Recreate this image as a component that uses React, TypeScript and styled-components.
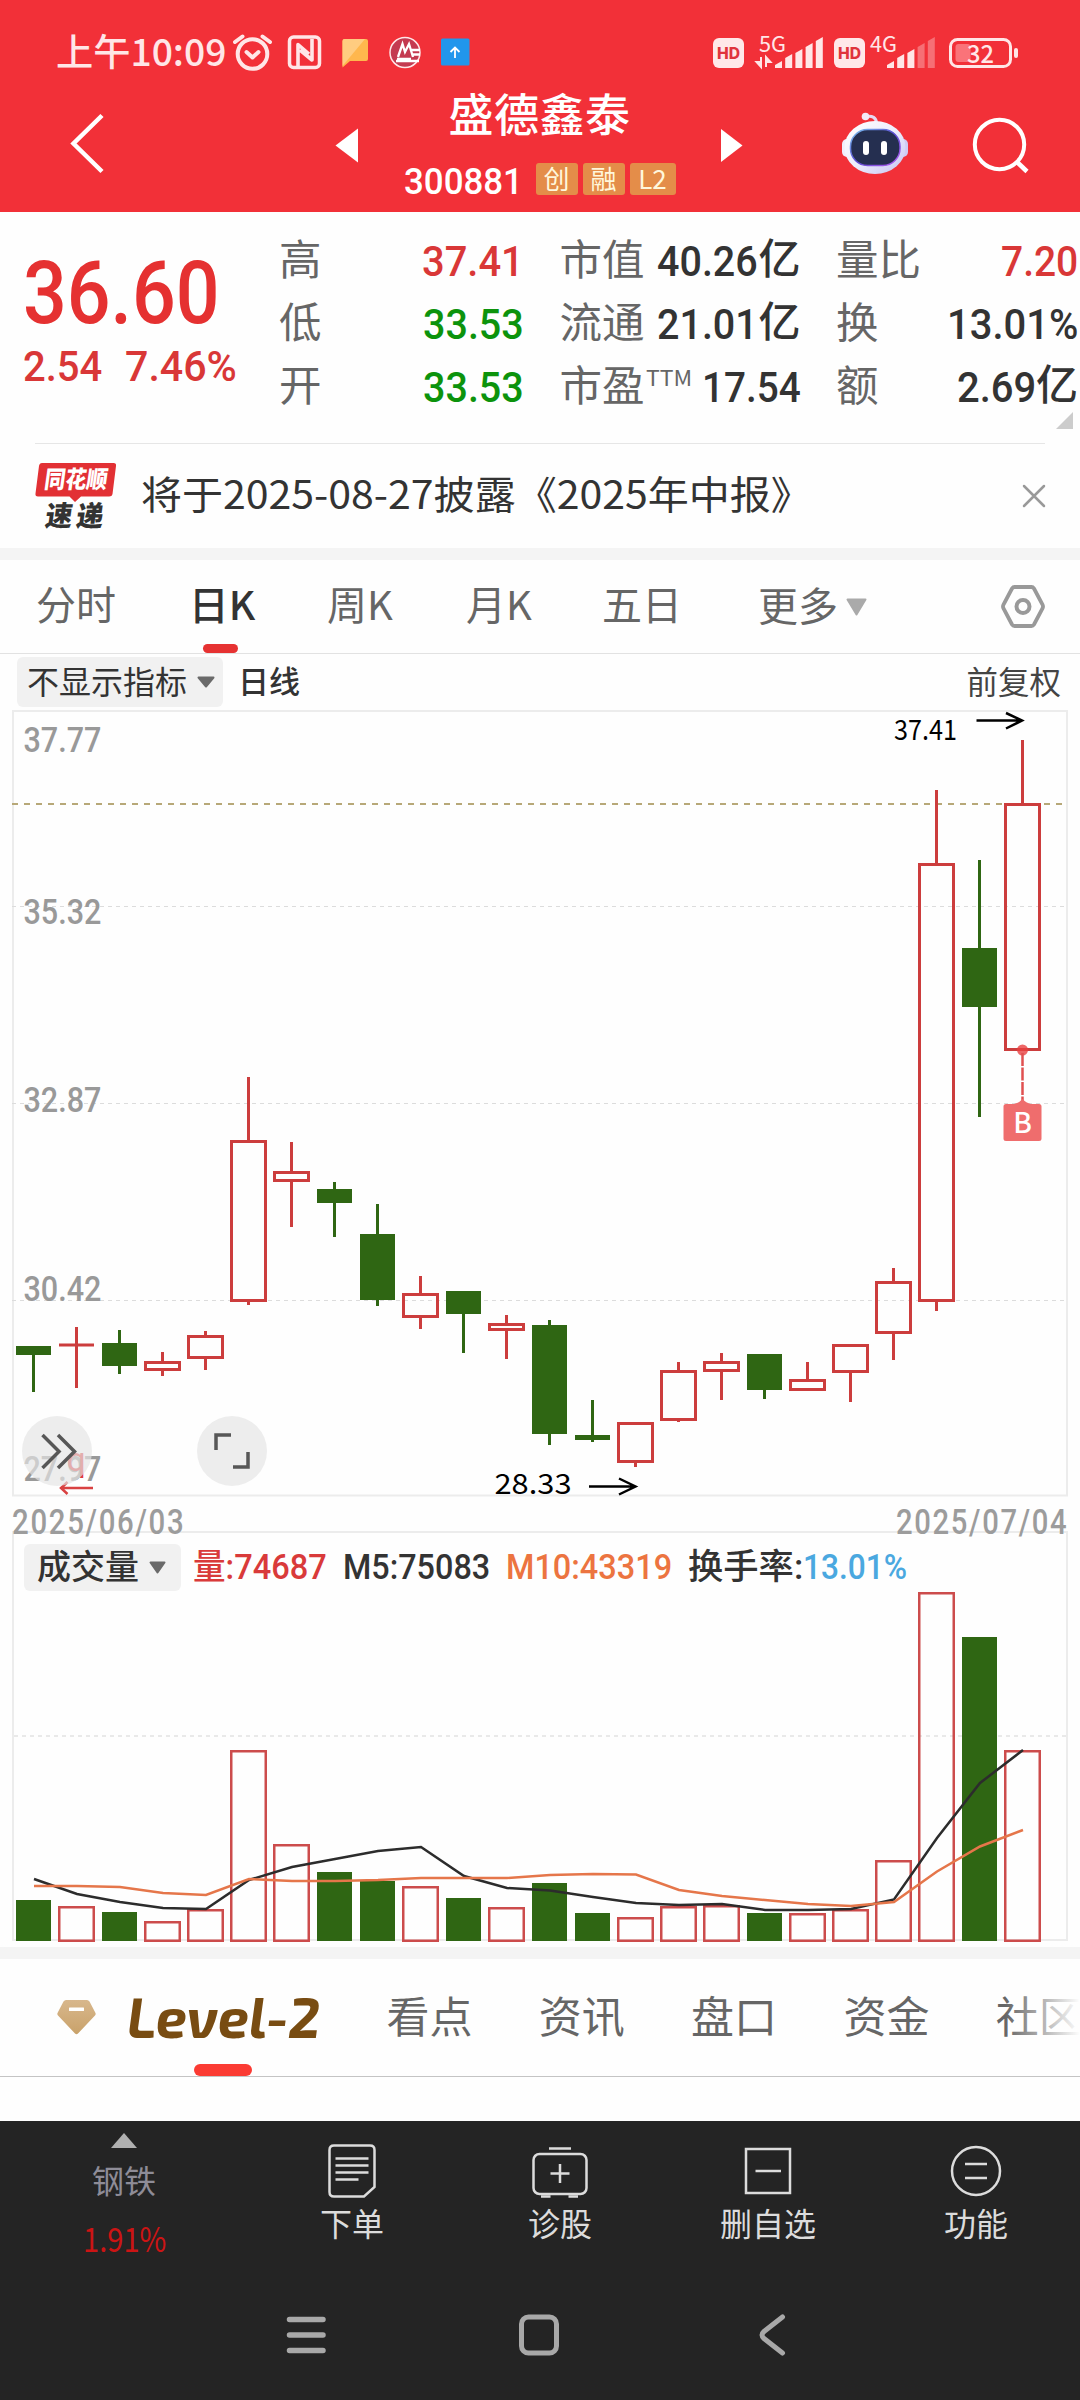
import React, { useLayoutEffect, useRef, useState } from 'react';
import styled, { createGlobalStyle } from 'styled-components';

const CJK = '"Noto Sans CJK SC", sans-serif';
const DIN = 'Roboto, "Noto Sans CJK SC", sans-serif';
const UP = '#cc3d3d';
const DOWN = '#2f6613';

const Global = createGlobalStyle`
  html, body { margin: 0; padding: 0; background: #fff; }
  * { box-sizing: border-box; }
  svg { display: block; flex: none; overflow: visible; }
`;

const Screen = styled.div`
  width: 1080px;
  height: 2400px;
  overflow: hidden;
  display: flex;
  flex-direction: column;
  background: #fefefe;
  font-family: ${CJK};
  color: #333;
`;

/* ---------- condensed text: squeezes a label to a given width ---------- */

const FitBox = styled.span<{ $w: number }>`
  display: inline-block;
  flex: none;
  width: ${(p) => p.$w}px;
  white-space: nowrap;
`;
const FitInner = styled.span`
  display: inline-block;
  transform-origin: 0 50%;
`;

function Fit({ w, children }: { w: number; children: React.ReactNode }) {
  const ref = useRef<HTMLSpanElement>(null);
  const [k, setK] = useState(1);
  useLayoutEffect(() => {
    if (ref.current && ref.current.offsetWidth) setK(w / ref.current.offsetWidth);
  }, [w]);
  return (
    <FitBox $w={w}>
      <FitInner ref={ref} style={{ transform: `scaleX(${k})` }}>{children}</FitInner>
    </FitBox>
  );
}

/* ---------- header ---------- */

const Header = styled.header`
  height: 212px;
  flex: none;
  background: #f23038;
  color: #fff;
`;
const StatusBar = styled.div`
  height: 82px;
  padding: 24px 61px 0 56px;
  display: flex;
  justify-content: space-between;
  align-items: center;
`;
const StatusGroup = styled.div<{ $gap?: number }>`
  display: flex;
  align-items: center;
  gap: ${(p) => p.$gap ?? 0}px;
`;
const Clock = styled.span`
  font: 500 37px/50px ${CJK};
  color: #ffe6e7;
  margin-top: -7px;
`;
const NavBar = styled.div`
  height: 130px;
  padding: 0 50px 0 70px;
  display: flex;
  align-items: flex-start;
`;
const IconSlot = styled.div<{ $ml?: number; $mt?: number }>`
  margin-left: ${(p) => p.$ml ?? 0}px;
  margin-top: ${(p) => p.$mt ?? 0}px;
`;
const TitleBlock = styled.div`
  width: 271px;
  margin-left: 46px;
  display: flex;
  flex-direction: column;
  align-items: center;
`;
const StockName = styled.h1`
  margin: 0;
  height: 81px;
  font: 500 45px/62px ${CJK};
  letter-spacing: 0.5px;
`;
const CodeRow = styled.div`
  display: flex;
  align-items: center;
  gap: 5px;
  height: 32px;
`;
const Code = styled.span`
  font: 500 37.5px/32px ${DIN};
  margin: 3px 8px 0 0;
`;
const Badge = styled.span<{ $w?: number }>`
  width: ${(p) => p.$w ?? 42}px;
  height: 32px;
  border-radius: 3px;
  background: #e48d49;
  color: #fff7dc;
  font: 400 26px/29px ${CJK};
  text-align: center;
`;

const HdIcon = () => (
  <svg width="31" height="30" viewBox="0 0 31 30">
    <rect width="31" height="30" rx="6" fill="#ffe8e9" />
    <text x="15.5" y="20.5" textAnchor="middle" fontFamily="Inter, sans-serif" fontWeight="800" fontSize="16" textLength="23" lengthAdjust="spacingAndGlyphs" fill="#e0343c">HD</text>
  </svg>
);

function Signal({ label, level, arrows, left }: { label: string; level: number; arrows?: boolean; left: number }) {
  const tops = [26, 19, 14, 8, 2];
  return (
    <svg width="68" height="36" viewBox="0 0 68 36">
      <text x={left} y="17" fontFamily={CJK} fontSize="22" fill="#ffe6e7" textLength="27" lengthAdjust="spacingAndGlyphs">{label}</text>
      {arrows && <path d="M6 22V32L1.500 27H6M11 32V22L15.500 27H11" fill="#ffe6e7" stroke="#ffe6e7" strokeWidth="2" />}
      {tops.map((t, i) => (
        <path key={i} d={`M${20 + i * 10.2} ${t + 4}L${27 + i * 10.2} ${t}V33H${20 + i * 10.2}Z`} fill="#ffe6e7" opacity={i < level ? 1 : 0.35} />
      ))}
    </svg>
  );
}

function StatusIcons() {
  return (
    <svg width="240" height="40" viewBox="232 33 240 40">
      <g fill="none" stroke="#ffe6e7" strokeWidth="4" strokeLinecap="round" strokeLinejoin="round">
        <circle cx="253.5" cy="54" r="14.8" />
        <path d="M247.500 52L253.500 57.500L259.500 52M236 42L243.500 36.500M271 42L263.500 36.500" />
        <rect x="290.500" y="37" width="30" height="30.500" rx="4" strokeWidth="3.500" />
        <path d="M299 66V44.500L310 54M313 39V60L301 50" strokeWidth="3.600" strokeLinecap="butt" />
      </g>
      <path d="M343.500 41Q343.500 39 345.500 39H367Q369 39 369 41V59Q369 61 367 61H351L343.500 67.500Z" fill="#ffb74d" />
      <path d="M343.500 41Q343.500 39 345.500 39H366L343.500 66Z" fill="#ffcc80" />
      <circle cx="406" cy="52.500" r="15" fill="#c43a50" stroke="#ffe6e7" strokeWidth="1.500" />
      <path d="M399 57L403.500 44L406 52L410 44L414 57M398 59H412M412 50H421M414 54.500H421M397 61H420" fill="none" stroke="#fff" strokeWidth="2.300" />
      <rect x="442" y="38.500" width="28.500" height="27" rx="1.500" fill="#2196ec" />
      <path d="M456 58V48M451.500 52L456 47.500L460.500 52" fill="none" stroke="#fff" strokeWidth="1.800" />
    </svg>
  );
}

const Battery = () => (
  <svg width="70" height="30" viewBox="949 37 70 30">
    <rect x="950.5" y="38.500" width="60" height="27" rx="7" fill="none" stroke="#ffe6e7" strokeWidth="3" />
    <rect x="955.5" y="43" width="15" height="18" rx="3" fill="#fa7379" />
    <rect x="1014" y="47" width="4" height="10" rx="2" fill="#ffe6e7" />
    <text x="967" y="61.500" fontFamily={CJK} fontWeight="500" fontSize="25.500" fill="#ffe6e7" textLength="27" lengthAdjust="spacingAndGlyphs">32</text>
  </svg>
);

const Robot = () => (
  <svg width="66" height="61" viewBox="842 113 66 61">
    <defs>
      <linearGradient id="shell" x1="0" y1="0" x2="1" y2="1">
        <stop offset="0" stopColor="#fff" />
        <stop offset="0.5" stopColor="#eeeefc" />
        <stop offset="1" stopColor="#c5c2f2" />
      </linearGradient>
      <linearGradient id="visor" x1="0" y1="0" x2="1" y2="1">
        <stop offset="0" stopColor="#7cc6f0" />
        <stop offset="0.5" stopColor="#5a4bd0" />
        <stop offset="1" stopColor="#b45af0" />
      </linearGradient>
    </defs>
    <path d="M866 116.500Q876 115 876.500 123" fill="none" stroke="#e6d9f2" strokeWidth="3" />
    <circle cx="865.500" cy="116.500" r="3.800" fill="#f3e9f7" />
    <rect x="842" y="139" width="10" height="18" rx="5" fill="#f0effc" />
    <rect x="898" y="139" width="10" height="18" rx="5" fill="#cfccf4" />
    <ellipse cx="875" cy="147.500" rx="30.500" ry="26.500" fill="url(#shell)" />
    <rect x="850.500" y="129.500" width="49.500" height="36" rx="17" fill="#252f50" stroke="url(#visor)" strokeWidth="1.500" />
    <rect x="863" y="141" width="6" height="14" rx="3" fill="#fff" />
    <rect x="881" y="141" width="6" height="14" rx="3" fill="#fff" />
  </svg>
);

/* ---------- quote ---------- */

const Quote = styled.section`
  height: 231px;
  flex: none;
  display: flex;
  padding: 17px 0 0 23px;
`;
const PriceBlock = styled.div`
  width: 256px;
  color: #e53131;
`;
const Price = styled.div`
  font: 500 88px/96px ${DIN};
  padding-top: 16px;
  height: 112px;
`;
const Change = styled.div`
  display: flex;
  gap: 23px;
  font: 500 43px/50px ${DIN};
  color: #d93737;
`;
const Stats = styled.div`
  display: grid;
  grid-template-columns: 245px 241px 242px;
  grid-template-rows: repeat(3, 63.300px);
  column-gap: 35.500px;
`;
const Stat = styled.div`
  display: flex;
  justify-content: space-between;
  align-items: center;
  position: relative;
`;
const StatLabel = styled.span`
  font: 400 42.5px/60px ${CJK};
  color: #666;
  margin-top: -8px;
  display: flex;
`;
const Sup = styled.span`
  font: 400 22px/24px ${CJK};
  margin: 11px 0 0 1px;
`;
const StatValue = styled.span<{ $c?: string }>`
  font: 500 43px/60px ${DIN};
  color: ${(p) => p.$c ?? '#333'};
  display: flex;
  white-space: nowrap;
`;
const Unit = styled.span`
  font: 500 42px/60px ${CJK};
  margin-top: -5px;
`;
const Corner = styled.i`
  position: absolute;
  right: 5px;
  bottom: -10px;
  border-left: 17px solid transparent;
  border-bottom: 17px solid #ccc;
`;

/* ---------- news ---------- */

const News = styled.section`
  height: 105px;
  flex: none;
  margin: 0 35px;
  border-top: 1px solid #e6e6e6;
  display: flex;
  align-items: center;
`;
const NewsText = styled.span`
  font: 400 39px/60px ${CJK};
  margin: -8px 0 0 24px;
  flex: 1;
`;
const Band = styled.div`
  height: 12px;
  flex: none;
  background: #f4f4f4;
`;

/* ---------- chart tabs ---------- */

const Tabs = styled.nav`
  height: 94px;
  flex: none;
  border-bottom: 1px solid #e2e2e2;
  padding: 0 35px 0 36px;
  display: flex;
  align-items: stretch;
`;
const Tab = styled.div<{ $w: number; $gap?: number; $on?: boolean }>`
  width: ${(p) => p.$w}px;
  margin-right: ${(p) => p.$gap ?? 0}px;
  padding-top: 2px;
  display: flex;
  flex-direction: column;
  align-items: center;
  justify-content: space-between;
  font: ${(p) => (p.$on ? 500 : 400)} 40px/82px ${CJK};
  color: ${(p) => (p.$on ? '#333' : '#666')};
`;
const TabBar = styled.i<{ $w: number; $h: number; $c: string; $shift?: number }>`
  width: ${(p) => p.$w}px;
  height: ${(p) => p.$h}px;
  margin-right: ${(p) => p.$shift ?? 0}px;
  border-radius: ${(p) => p.$h / 2}px;
  background: ${(p) => p.$c};
`;
const More = styled.div`
  display: flex;
  align-items: center;
  gap: 8px;
  flex: 1;
  font: 400 40px/84px ${CJK};
  color: #666;
`;
const MoreText = styled.span`
  margin-top: -6px;
`;
const Hex = styled.div`
  align-self: center;
`;

const Indicators = styled.div`
  height: 56px;
  flex: none;
  padding: 3px 19px 3px 17px;
  display: flex;
  align-items: center;
`;
const Pill = styled.div<{ $w: number; $h: number; $pl: number }>`
  width: ${(p) => p.$w}px;
  height: ${(p) => p.$h}px;
  padding-left: ${(p) => p.$pl}px;
  border-radius: 6px;
  background: #f1f1f1;
  display: flex;
  align-items: center;
  gap: 10px;
`;
const Small = styled.span<{ $size?: number; $weight?: number; $c?: string; $ml?: number }>`
  font: ${(p) => p.$weight ?? 400} ${(p) => p.$size ?? 32}px/46px ${CJK};
  color: ${(p) => p.$c ?? '#333'};
  margin: -5px 0 0 ${(p) => p.$ml ?? 0}px;
  white-space: nowrap;
`;
const Spacer = styled.span`
  flex: 1;
`;

function Caret({ w, h, c }: { w: number; h: number; c: string }) {
  return (
    <svg width={w} height={h} viewBox={`0 0 ${w} ${h}`}>
      <path d={`M1.500 1.500H${w - 1.5}L${w / 2} ${h - 1.5}Z`} fill={c} stroke={c} strokeWidth="2" strokeLinejoin="round" />
    </svg>
  );
}

/* ---------- chart ---------- */

type Candle = [up: boolean, high: number, top: number, bottom: number, low: number, volume: number];

const candles: Candle[] = [
  [false, 1346, 1346, 1355, 1392, 1900],
  [true, 1327, 1345, 1345, 1388, 1906],
  [false, 1330, 1343, 1366, 1374, 1912],
  [true, 1352, 1361, 1371, 1376, 1921],
  [true, 1331, 1335, 1359, 1370, 1909],
  [true, 1077, 1140, 1302, 1305, 1750],
  [true, 1142, 1171, 1182, 1227, 1844],
  [false, 1182, 1189, 1203, 1237, 1872],
  [false, 1204, 1234, 1300, 1306, 1881],
  [true, 1276, 1293, 1318, 1329, 1886],
  [false, 1291, 1291, 1314, 1353, 1898],
  [true, 1315, 1323, 1331, 1359, 1907],
  [false, 1320, 1325, 1434, 1445, 1883],
  [false, 1400, 1435, 1440, 1442, 1913],
  [true, 1422, 1422, 1463, 1467, 1917],
  [true, 1362, 1370, 1421, 1422, 1906],
  [true, 1353, 1361, 1372, 1400, 1905],
  [false, 1354, 1354, 1390, 1399, 1913],
  [true, 1362, 1379, 1391, 1391, 1913],
  [true, 1344, 1344, 1373, 1402, 1909],
  [true, 1268, 1281, 1334, 1360, 1860],
  [true, 790, 863, 1302, 1311, 1592],
  [false, 860, 948, 1007, 1117, 1637],
  [true, 740, 803, 1051, 1051, 1750],
];
const ma5 = [1879, 1894, 1902, 1908, 1909, 1880, 1867, 1859, 1851, 1847, 1876, 1888, 1890.5, 1897, 1903, 1905, 1904, 1910, 1910, 1909, 1899.5, 1838, 1783, 1750];
const ma10 = [1886, 1886, 1887, 1893, 1895, 1879, 1881, 1881, 1880, 1878, 1878, 1878, 1875, 1874, 1874.5, 1890, 1896, 1900, 1904, 1906, 1902, 1871.5, 1846.5, 1830];
const cx = (i: number) => 33.5 + 43 * i;
const line = (ys: number[]) => ys.map((y, i) => `${cx(i) + 0.5},${y}`).join(' ');

const labels: [string, number][] = [
  ['37.77', 752],
  ['35.32', 924],
  ['32.87', 1112],
  ['30.42', 1301],
  ['27.97', 1481],
];

function PriceChart() {
  return (
    <svg width="1080" height="787" viewBox="0 710 1080 787">
      <rect x="13" y="711" width="1054" height="784.500" fill="none" stroke="#ececec" strokeWidth="2" />
      {[906.5, 1103.5, 1300.5].map((y) => (
        <path key={y} d={`M12 ${y}H1066`} stroke="#dcdcdc" strokeWidth="1" strokeDasharray="4 4" />
      ))}
      <path d="M12 804H1066" stroke="#b7a878" strokeWidth="2" strokeDasharray="6 6" />
      {labels.map(([t, y]) => (
        <text key={t} x="23.500" y={y} fontFamily={DIN} fontWeight="500" fontSize="34.500" fill="#999" textLength="78" lengthAdjust="spacingAndGlyphs">{t}</text>
      ))}
      {candles.map(([up, hi, top, bottom, lo], i) => {
        const x = cx(i);
        if (top === bottom)
          return <path key={i} d={`M${x} ${hi}V${lo}M${x - 17.5} ${top}H${x + 17.5}`} stroke={UP} strokeWidth="3" />;
        return (
          <g key={i}>
            <path d={`M${x} ${hi}V${top + 1}M${x} ${bottom - 1}V${lo}`} stroke={up ? UP : DOWN} strokeWidth="3" />
            {up ? (
              <rect x={x - 17} y={top + 1.5} width="34" height={bottom - top - 3} fill="none" stroke={UP} strokeWidth="3" />
            ) : (
              <rect x={x - 17.5} y={top} width="35" height={bottom - top} fill={DOWN} />
            )}
          </g>
        );
      })}
      <circle cx="1022.500" cy="1050" r="5.500" fill="#e84040" opacity="0.800" />
      <path d="M1022.500 1053V1101" stroke="#e05050" strokeWidth="2.500" strokeDasharray="13 1.500" />
      <path d="M1006 1104H1014Q1019 1103 1022.500 1099Q1026 1103 1031 1104H1039Q1041.500 1104 1041.500 1106.500V1138.500Q1041.500 1141 1039 1141H1006Q1003.500 1141 1003.500 1138.500V1106.500Q1003.500 1104 1006 1104Z" fill="#ef6d6d" />
      <text x="1022.500" y="1133" textAnchor="middle" fontFamily={CJK} fontWeight="500" fontSize="28" fill="#fff">B</text>
      <g fontFamily={CJK} fontSize="28.500" fill="#000">
        <text x="894" y="740" textLength="63" lengthAdjust="spacingAndGlyphs">37.41</text>
        <text x="494.500" y="1494" textLength="77" lengthAdjust="spacingAndGlyphs">28.33</text>
      </g>
      <path d="M976.500 720.500H1021M1006 713L1022 720.500L1006 728.500M589 1486.500H634.500M619 1478.500L635.500 1486.500L619 1494.500" fill="none" stroke="#000" strokeWidth="2.500" />
      <text x="66.500" y="1471" fontFamily={DIN} fontWeight="400" fontSize="34" fill="#e03a3a">q</text>
      <path d="M93 1488H61M67.500 1482L61 1488L67.500 1494" fill="none" stroke="#d94141" strokeWidth="2.500" />
      <circle cx="57" cy="1451" r="35" fill="#e4e4e4" opacity="0.680" />
      <circle cx="232" cy="1451" r="35" fill="#ededed" />
      <g fill="none" stroke="#575757" strokeWidth="3.500">
        <path d="M42.500 1435L59 1451.500L42.500 1468M58 1435L74.500 1451.500L58 1468" />
        <path d="M231 1435H216V1450M248 1452V1467H233" />
      </g>
    </svg>
  );
}

const Dates = styled.div`
  height: 34px;
  flex: none;
  padding: 9px 12px 0;
  display: flex;
  justify-content: space-between;
  font: 500 35px/34px ${DIN};
  letter-spacing: 2px;
  color: #9c9c9c;
`;
const VolumePanel = styled.section`
  height: 410px;
  flex: none;
  margin: 0 12px 6px;
  border: 2px solid #ececec;
`;
const VolumeHead = styled.div`
  height: 59px;
  padding: 9px 0 0 10px;
  display: flex;
  align-items: center;
`;
const Metric = styled.span<{ $c: string; $ml: number }>`
  font: 500 35px/46px ${DIN};
  color: ${(p) => p.$c};
  margin: 2px 0 0 ${(p) => p.$ml}px;
  display: flex;
`;

function VolumeChart() {
  return (
    <svg width="1052" height="347" viewBox="14 1592 1052 347">
      <path d="M14 1736H1066" stroke="#e9e9e9" strokeWidth="2" strokeDasharray="4 4" />
      {candles.map(([up, , , , , v], i) =>
        up ? (
          <rect key={i} x={cx(i) - 17.25} y={v + 1.25} width="34.500" height={1942 - v - 2.5} fill="none" stroke="#cc4c4c" strokeWidth="2.500" />
        ) : (
          <rect key={i} x={cx(i) - 17.5} y={v} width="35" height={1941 - v} fill={DOWN} />
        ),
      )}
      <polyline points={line(ma5)} fill="none" stroke="#2c2c2c" strokeWidth="2.500" />
      <polyline points={line(ma10)} fill="none" stroke="#e5764a" strokeWidth="2.500" />
    </svg>
  );
}

/* ---------- section tabs ---------- */

const Sections = styled.nav`
  height: 118px;
  flex: none;
  border-bottom: 1px solid #c4c4c4;
  padding-left: 57px;
  display: flex;
  overflow: hidden;
  position: relative;
`;
const Gem = styled.div`
  margin: 41px 31px 0 0;
`;
const LevelTab = styled.div`
  width: 193px;
  margin-right: 66.500px;
  display: flex;
  flex-direction: column;
  align-items: center;
  justify-content: space-between;
  font: italic 700 56px/113px "Exo 2", Roboto, sans-serif;
  color: #784c12;
`;
const LevelName = styled.span`
  height: 105px;
`;
const SectionTab = styled.span`
  width: 84px;
  margin-right: 68.300px;
  flex: none;
  font: 400 43px/110px ${CJK};
  color: #666;
  white-space: nowrap;
`;
const Fade = styled.i`
  position: absolute;
  right: 0;
  top: 0;
  width: 75px;
  height: 110px;
  background: linear-gradient(90deg, rgba(254, 254, 254, 0), #fefefe);
`;
const Blank = styled.div`
  height: 44px;
  flex: none;
`;

/* ---------- bottom ---------- */

const Bottom = styled.footer`
  height: 279px;
  flex: none;
  background: #242424;
`;
const Actions = styled.div`
  height: 150px;
  padding-left: 20px;
  display: grid;
  grid-template-columns: 228px 208px 208px 208px 208px;
`;
const Action = styled.div`
  display: flex;
  flex-direction: column;
  align-items: center;
  padding-top: 22px;
  font: 400 32px/46px ${CJK};
  color: #dcdcdc;
`;
const ActionLabel = styled.span`
  margin-top: 0;
`;
const Sector = styled.div`
  width: 208px;
  display: flex;
  flex-direction: column;
  align-items: center;
  padding-top: 12px;
`;
const SectorName = styled.span`
  font: 400 32px/46px ${CJK};
  color: #8e8c97;
  margin-top: 8px;
`;
const SectorPct = styled.span`
  font: 400 34px/46px ${CJK};
  color: #cc1414;
  margin-top: 13px;
`;
const SysNav = styled.div`
  height: 129px;
  padding: 42px 0 0 286px;
  display: flex;
  gap: 193px;
`;

const stroke = { fill: 'none', stroke: '#dcdcdc', strokeWidth: 2.5 } as const;

export default function App() {
  return (
    <Screen>
      <Global />
      <Header>
        <StatusBar>
          <StatusGroup $gap={5}>
            <Clock><Fit w={170}>上午10:09</Fit></Clock>
            <StatusIcons />
          </StatusGroup>
          <StatusGroup>
            <HdIcon />
            <IconSlot $ml={11}><Signal label="5G" level={5} arrows left={4} /></IconSlot>
            <IconSlot $ml={11}><HdIcon /></IconSlot>
            <IconSlot $ml={2}><Signal label="4G" level={3} left={3} /></IconSlot>
            <IconSlot $ml={14}><Battery /></IconSlot>
          </StatusGroup>
        </StatusBar>
        <NavBar>
          <IconSlot $mt={31}>
            <svg width="34" height="62" viewBox="70 113 34 62">
              <path d="M102 115.500L73.500 143.500L102 171.500" fill="none" stroke="#fff" strokeWidth="4.500" />
            </svg>
          </IconSlot>
          <IconSlot $ml={231} $mt={46}>
            <svg width="23" height="35" viewBox="0 0 23 35"><path d="M0.500 17.500L23 0.500V34.500Z" fill="#fff" /></svg>
          </IconSlot>
          <TitleBlock>
            <StockName>盛德鑫泰</StockName>
            <CodeRow>
              <Code><Fit w={119}>300881</Fit></Code>
              <Badge>创</Badge>
              <Badge>融</Badge>
              <Badge $w={46}>L2</Badge>
            </CodeRow>
          </TitleBlock>
          <IconSlot $ml={46} $mt={47}>
            <svg width="22" height="33" viewBox="0 0 22 33"><path d="M0 0V33L21.500 16.500Z" fill="#fff" /></svg>
          </IconSlot>
          <IconSlot $ml={99} $mt={31}><Robot /></IconSlot>
          <IconSlot $ml={64} $mt={35}>
            <svg width="58" height="58" viewBox="972 117 58 58">
              <circle cx="999.500" cy="144.500" r="24.700" fill="none" stroke="#fff" strokeWidth="4" />
              <path d="M1017 162L1027 171.500" stroke="#fff" strokeWidth="4.500" />
            </svg>
          </IconSlot>
        </NavBar>
      </Header>

      <Quote>
        <PriceBlock>
          <Price><Fit w={197}>36.60</Fit></Price>
          <Change><Fit w={79}>2.54</Fit><Fit w={112}>7.46%</Fit></Change>
        </PriceBlock>
        <Stats>
          <Stat><StatLabel>高</StatLabel><StatValue $c="#d93737"><Fit w={102}>37.41</Fit></StatValue></Stat>
          <Stat><StatLabel>市值</StatLabel><StatValue><Fit w={101}>40.26</Fit><Unit>亿</Unit></StatValue></Stat>
          <Stat><StatLabel>量比</StatLabel><StatValue $c="#d93737"><Fit w={77}>7.20</Fit></StatValue></Stat>
          <Stat><StatLabel>低</StatLabel><StatValue $c="#0c930c"><Fit w={101}>33.53</Fit></StatValue></Stat>
          <Stat><StatLabel>流通</StatLabel><StatValue><Fit w={101}>21.01</Fit><Unit>亿</Unit></StatValue></Stat>
          <Stat><StatLabel>换</StatLabel><StatValue><Fit w={131}>13.01%</Fit></StatValue></Stat>
          <Stat><StatLabel>开</StatLabel><StatValue $c="#0c930c"><Fit w={101}>33.53</Fit></StatValue></Stat>
          <Stat><StatLabel>市盈<Sup><Fit w={46}>TTM</Fit></Sup></StatLabel><StatValue><Fit w={99}>17.54</Fit></StatValue></Stat>
          <Stat><StatLabel>额</StatLabel><StatValue><Fit w={79}>2.69</Fit><Unit>亿</Unit></StatValue><Corner /></Stat>
        </Stats>
      </Quote>

      <News>
        <svg width="82" height="66" viewBox="36 462 82 66">
          <path d="M43 462H114.500Q117.500 462 117 465L113.500 493Q113 495.500 110 495.500H82L76 501L70.500 495.500H39Q36 495.500 36.500 492.500L40 465Q40.500 462 43 462Z" fill="#e23034" />
          <g transform="skewX(-8)" fontFamily={CJK} fontWeight="900">
            <text x="113" y="487.500" fontSize="24" fill="#fff" textLength="63" lengthAdjust="spacingAndGlyphs">同花顺</text>
            <text x="119" y="525" fontSize="28" fill="#333" textLength="27" lengthAdjust="spacingAndGlyphs">速</text>
            <text x="150" y="525" fontSize="28" fill="#333" textLength="27" lengthAdjust="spacingAndGlyphs">递</text>
          </g>
        </svg>
        <NewsText><Fit w={671}>将于2025-08-27披露《2025年中报》</Fit></NewsText>
        <svg width="22" height="22" viewBox="0 0 22 22">
          <path d="M1 1L21 21M21 1L1 21" stroke="#999" strokeWidth="2.500" strokeLinecap="round" />
        </svg>
      </News>
      <Band />

      <Tabs>
        <Tab $w={80} $gap={72}>分时</Tab>
        <Tab $w={68} $gap={70} $on>日K<TabBar $w={35} $h={9} $c="#e63232" $shift={4} /></Tab>
        <Tab $w={68} $gap={71}>周K</Tab>
        <Tab $w={68} $gap={69}>月K</Tab>
        <Tab $w={80} $gap={76}>五日</Tab>
        <More><MoreText>更多</MoreText><Caret w={21} h={18} c="#aaa" /></More>
        <Hex>
          <svg width="44" height="43" viewBox="0 0 44 43">
            <path d="M13.500 2H30.500Q32 2 33 3.500L41.500 19.500Q42.500 21.500 41.500 23.500L33 39.500Q32 41 30.500 41H13.500Q12 41 11 39.500L2.500 23.500Q1.500 21.500 2.500 19.500L11 3.500Q12 2 13.500 2Z" fill="none" stroke="#999" strokeWidth="3.800" />
            <circle cx="22" cy="21.500" r="6.500" fill="none" stroke="#999" strokeWidth="4" />
          </svg>
        </Hex>
      </Tabs>

      <Indicators>
        <Pill $w={206} $h={50} $pl={10}>
          <Small>不显示指标</Small>
          <Caret w={18} h={12} c="#6a6a6a" />
        </Pill>
        <Small $size={31} $weight={500} $ml={15}>日线</Small>
        <Spacer />
        <Small $size={31.5} $c="#444">前复权</Small>
      </Indicators>

      <PriceChart />
      <Dates><Fit w={173}>2025/06/03</Fit><Fit w={172}>2025/07/04</Fit></Dates>

      <VolumePanel>
        <VolumeHead>
          <Pill $w={157} $h={47} $pl={13}>
            <Small $size={34} $weight={500}>成交量</Small>
            <Caret w={17} h={13} c="#6a6a6a" />
          </Pill>
          <Metric $c="#d93a3a" $ml={12}><Fit w={134}>量:74687</Fit></Metric>
          <Metric $c="#333" $ml={16}><Fit w={147}>M5:75083</Fit></Metric>
          <Metric $c="#ec7440" $ml={16}><Fit w={166}>M10:43319</Fit></Metric>
          <Metric $c="#333" $ml={16}><Fit w={115}>换手率:</Fit></Metric>
          <Metric $c="#4aa8e0" $ml={0}><Fit w={104}>13.01%</Fit></Metric>
        </VolumeHead>
        <VolumeChart />
      </VolumePanel>
      <Band />

      <Sections>
        <Gem>
          <svg width="39" height="35" viewBox="0 0 39 35">
            <defs>
              <linearGradient id="gem" x1="0" y1="0" x2="0" y2="1">
                <stop offset="0" stopColor="#d8b78c" />
                <stop offset="1" stopColor="#c9a26a" />
              </linearGradient>
            </defs>
            <path d="M9 0H30Q31.500 0 32.500 1.500L38.500 13Q39 14.500 38 15.500L21 33.500Q19.500 35 18 33.500L1 15.500Q0 14.500 0.500 13L6.500 1.500Q7.500 0 9 0Z" fill="url(#gem)" />
            <rect x="12" y="7.500" width="15" height="3.500" rx="0.500" fill="#fff" />
          </svg>
        </Gem>
        <LevelTab><LevelName><Fit w={193}>Level-2</Fit></LevelName><TabBar $w={58} $h={12} $c="#fb3b33" $shift={2} /></LevelTab>
        {['看点', '资讯', '盘口', '资金', '社区'].map((t) => (
          <SectionTab key={t}>{t}</SectionTab>
        ))}
        <Fade />
      </Sections>
      <Blank />

      <Bottom>
        <Actions>
          <Sector>
            <svg width="26" height="15" viewBox="0 0 26 15"><path d="M13 0L26 15H0Z" fill="#b0b0b0" /></svg>
            <SectorName>钢铁</SectorName>
            <SectorPct><Fit w={83}>1.91%</Fit></SectorPct>
          </Sector>
          <Action>
            <svg width="56" height="56" viewBox="324 2143 56 56">
              <path d="M334 2145.500H370Q374.500 2145.500 374.500 2150V2187L364 2196.500H334Q329.500 2196.500 329.500 2192V2150Q329.500 2145.500 334 2145.500Z" {...stroke} />
              <path d="M335.500 2158.500H368.500M335.500 2165.500H368.500M335.500 2172.500H368.500M335.500 2179.500H358.500" {...stroke} />
            </svg>
            <ActionLabel>下单</ActionLabel>
          </Action>
          <Action>
            <svg width="56" height="56" viewBox="532 2143 56 56">
              <rect x="533.500" y="2154" width="53" height="40" rx="6" {...stroke} />
              <path d="M549 2148.500H571M560 2164V2183M550.500 2173.500H569.500M541 2196.500H550.500M568.500 2196.500H578" {...stroke} />
            </svg>
            <ActionLabel>诊股</ActionLabel>
          </Action>
          <Action>
            <svg width="56" height="56" viewBox="740 2143 56 56">
              <rect x="746" y="2149" width="44" height="44" {...stroke} />
              <path d="M755.500 2171H781" {...stroke} />
            </svg>
            <ActionLabel>删自选</ActionLabel>
          </Action>
          <Action>
            <svg width="56" height="56" viewBox="948 2143 56 56">
              <circle cx="976" cy="2171" r="24" {...stroke} />
              <path d="M965 2164H987M965 2178H987" {...stroke} />
            </svg>
            <ActionLabel>功能</ActionLabel>
          </Action>
        </Actions>
        <SysNav>
          <svg width="40" height="44" viewBox="286 2313 40 44">
            <path d="M289.500 2319.500H323M289.500 2335H323M289.500 2350.500H323" stroke="#a8a8a8" strokeWidth="5.500" strokeLinecap="round" />
          </svg>
          <svg width="40" height="44" viewBox="519 2313 40 44">
            <rect x="521.500" y="2317" width="35" height="36" rx="7" fill="none" stroke="#a8a8a8" strokeWidth="5" />
          </svg>
          <svg width="40" height="44" viewBox="752 2313 40 44">
            <path d="M782.500 2317L764 2331.500Q760 2335 764 2338.500L782.500 2353" fill="none" stroke="#a8a8a8" strokeWidth="5" strokeLinecap="round" />
          </svg>
        </SysNav>
      </Bottom>
    </Screen>
  );
}
